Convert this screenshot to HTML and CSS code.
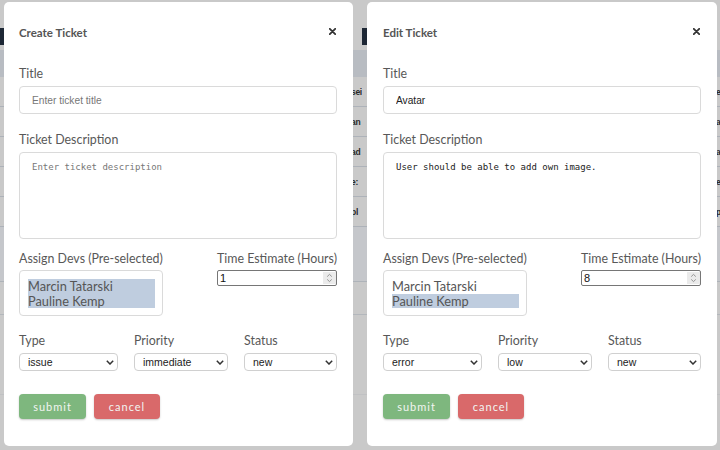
FILE: index.html
```html
<!DOCTYPE html>
<html lang="en">
<head>
<meta charset="utf-8">
<title>Tickets</title>
<link rel="stylesheet" href="styles.css">
</head>
<body>
<div class="screen">

  <div class="shot shot-left">
    <div class="page">
      <div class="nav"><div class="nav-block"></div></div>
      <div class="thead"></div>
      <div class="trow"><span class="cell cell-left">sei</span></div>
      <div class="trow"><span class="cell cell-left">an</span></div>
      <div class="trow"><span class="cell cell-left">ad</span></div>
      <div class="trow"><span class="cell cell-left">e:</span></div>
      <div class="trow"><span class="cell cell-left">pl</span></div>
      <div class="panel"></div>
      <div class="gap-a"></div>
      <div class="gap-b"></div>
    </div>

    <div class="modal modal-left">
      <div class="modal-header">
        <h2 class="modal-title">Create Ticket</h2>
        <svg class="close" width="7" height="7" viewBox="0 0 7 7"><path d="M0.8 0.8L6.2 6.2M6.2 0.8L0.8 6.2" stroke="#333" stroke-width="1.8" stroke-linecap="round"/></svg>
      </div>
      <div class="field field-title">
        <label class="label">Title</label>
        <input class="text-input" type="text" placeholder="Enter ticket title">
      </div>
      <div class="field field-desc">
        <label class="label">Ticket Description</label>
        <textarea class="textarea" placeholder="Enter ticket description"></textarea>
      </div>
      <div class="row-assign">
        <div class="col-devs">
          <label class="label label-tight">Assign Devs (Pre-selected)</label>
          <div class="multi">
            <div class="option selected">Marcin Tatarski</div>
            <div class="option selected">Pauline Kemp</div>
          </div>
        </div>
        <div class="col-time">
          <label class="label label-tight">Time Estimate (Hours)</label>
          <div class="number">
            <span class="number-value">1</span>
            <svg class="spin" width="13" height="12" viewBox="0 0 13 12"><rect width="13" height="12" fill="#ebebeb"/><path d="M4.2 4.6L6.5 2.4L8.8 4.6M4.2 7.4L6.5 9.6L8.8 7.4" fill="none" stroke="#8a8a8a" stroke-width="0.9"/></svg>
          </div>
        </div>
      </div>
      <div class="row-selects">
        <div class="sel-col">
          <label class="label">Type</label>
          <div class="select"><span>issue</span><svg class="chev" width="8" height="5" viewBox="0 0 8 5"><path d="M0.8 0.8L4 4L7.2 0.8" fill="none" stroke="#333" stroke-width="1.5"/></svg></div>
        </div>
        <div class="sel-col">
          <label class="label">Priority</label>
          <div class="select"><span>immediate</span><svg class="chev" width="8" height="5" viewBox="0 0 8 5"><path d="M0.8 0.8L4 4L7.2 0.8" fill="none" stroke="#333" stroke-width="1.5"/></svg></div>
        </div>
        <div class="sel-col">
          <label class="label">Status</label>
          <div class="select"><span>new</span><svg class="chev" width="8" height="5" viewBox="0 0 8 5"><path d="M0.8 0.8L4 4L7.2 0.8" fill="none" stroke="#333" stroke-width="1.5"/></svg></div>
        </div>
      </div>
      <div class="actions">
        <button class="btn btn-submit">submit</button>
        <button class="btn btn-cancel">cancel</button>
      </div>
    </div>
  </div>

  <div class="shot shot-right">
    <div class="page">
      <div class="nav"><div class="nav-block"></div></div>
      <div class="thead"></div>
      <div class="trow"><span class="cell cell-right">e</span></div>
      <div class="trow"><span class="cell cell-right">a</span></div>
      <div class="trow"><span class="cell cell-right">a</span></div>
      <div class="trow"><span class="cell cell-right">e</span></div>
      <div class="trow"><span class="cell cell-right">p</span></div>
      <div class="panel"></div>
      <div class="gap-a"></div>
      <div class="gap-b"></div>
    </div>

    <div class="modal modal-right">
      <div class="modal-header">
        <h2 class="modal-title">Edit Ticket</h2>
        <svg class="close" width="7" height="7" viewBox="0 0 7 7"><path d="M0.8 0.8L6.2 6.2M6.2 0.8L0.8 6.2" stroke="#333" stroke-width="1.8" stroke-linecap="round"/></svg>
      </div>
      <div class="field field-title">
        <label class="label">Title</label>
        <input class="text-input" type="text" value="Avatar">
      </div>
      <div class="field field-desc">
        <label class="label">Ticket Description</label>
        <textarea class="textarea">User should be able to add own image.</textarea>
      </div>
      <div class="row-assign">
        <div class="col-devs">
          <label class="label label-tight">Assign Devs (Pre-selected)</label>
          <div class="multi">
            <div class="option">Marcin Tatarski</div>
            <div class="option selected">Pauline Kemp</div>
          </div>
        </div>
        <div class="col-time">
          <label class="label label-tight">Time Estimate (Hours)</label>
          <div class="number">
            <span class="number-value">8</span>
            <svg class="spin" width="13" height="12" viewBox="0 0 13 12"><rect width="13" height="12" fill="#ebebeb"/><path d="M4.2 4.6L6.5 2.4L8.8 4.6M4.2 7.4L6.5 9.6L8.8 7.4" fill="none" stroke="#8a8a8a" stroke-width="0.9"/></svg>
          </div>
        </div>
      </div>
      <div class="row-selects">
        <div class="sel-col">
          <label class="label">Type</label>
          <div class="select"><span>error</span><svg class="chev" width="8" height="5" viewBox="0 0 8 5"><path d="M0.8 0.8L4 4L7.2 0.8" fill="none" stroke="#333" stroke-width="1.5"/></svg></div>
        </div>
        <div class="sel-col">
          <label class="label">Priority</label>
          <div class="select"><span>low</span><svg class="chev" width="8" height="5" viewBox="0 0 8 5"><path d="M0.8 0.8L4 4L7.2 0.8" fill="none" stroke="#333" stroke-width="1.5"/></svg></div>
        </div>
        <div class="sel-col">
          <label class="label">Status</label>
          <div class="select"><span>new</span><svg class="chev" width="8" height="5" viewBox="0 0 8 5"><path d="M0.8 0.8L4 4L7.2 0.8" fill="none" stroke="#333" stroke-width="1.5"/></svg></div>
        </div>
      </div>
      <div class="actions">
        <button class="btn btn-submit">submit</button>
        <button class="btn btn-cancel">cancel</button>
      </div>
    </div>
  </div>

</div>
</body>
</html>
```

FILE: styles.css
```css
* { box-sizing: border-box; }

body {
  margin: 0;
  background: #c9c9c9;
  font-family: Lato, "Liberation Sans", sans-serif;
}

.screen {
  display: flex;
  width: 720px;
  height: 450px;
}

.shot {
  position: relative;
  height: 450px;
  overflow: hidden;
  background: #c9c9c9;
  flex: none;
}

.shot-left { width: 362px; }
.shot-right { width: 358px; }

/* dimmed page behind the modal */
.page {
  width: 100%;
}

.nav {
  margin-top: 28px;
  height: 17px;
}

.nav-block {
  width: 80px;
  height: 17px;
  background: #1d2735;
}

.thead {
  margin-top: 5px;
  height: 27px;
  background: #b8bcc2;
}

.trow {
  height: 30px;
  border-bottom: 1px solid #adb2b9;
  display: flex;
  align-items: center;
}

.cell {
  font: 700 8.5px "Liberation Sans", sans-serif;
  color: #2a2a2a;
  white-space: nowrap;
}

.cell-left { margin-left: 351px; letter-spacing: -0.3px; }
.cell-right { margin-left: 354px; }

.panel {
  height: 55px;
  background: #c5c7cb;
  border-bottom: 1px solid #aeb3b9;
}

.gap-a {
  height: 33px;
  border-bottom: 1px solid #b3b7bc;
}

.gap-b {
  height: 80px;
  border-bottom: 1px solid #c0c1c3;
}

/* modal */
.modal {
  position: absolute;
  top: 2px;
  height: 444px;
  background: #fff;
  border-radius: 5px;
  padding: 24px 16px 0 16px;
}

.modal-left {
  left: 4px;
  width: 349px;
  padding-left: 15px;
}

.modal-right {
  left: 5px;
  width: 350px;
}

.modal-header {
  display: flex;
  justify-content: space-between;
  align-items: flex-start;
  height: 14px;
}

.modal-title {
  margin: 0;
  font: 700 11.5px/14px Lato, sans-serif;
  color: #555;
}

.close {
  margin-top: 2px;
  margin-right: 1px;
}

.label {
  display: block;
  font: 400 12.4px/16px Lato, sans-serif;
  color: #585858;
  padding-top: 1px;
  margin-bottom: 4px;
  white-space: nowrap;
}

.label-tight { margin-bottom: 3px; }

.field-title { margin-top: 25px; }
.field-desc { margin-top: 17px; }

.text-input {
  display: block;
  width: 100%;
  height: 28px;
  margin: 0;
  border: 1px solid #dadada;
  border-radius: 4px;
  padding: 0 12px;
  font: 400 10.2px "Liberation Sans", sans-serif;
  color: #222;
  background: #fff;
  outline: none;
}

.text-input::placeholder { color: #777; }

.textarea {
  display: block;
  width: 100%;
  height: 87px;
  margin: 0;
  border: 1px solid #dadada;
  border-radius: 4px;
  padding: 8px 12px;
  font: 400 9px/12px "DejaVu Sans Mono", monospace;
  color: #222;
  resize: none;
  outline: none;
  background: #fff;
}

.textarea::placeholder { color: #777; }

.row-assign {
  margin-top: 11px;
  display: flex;
  justify-content: space-between;
}

.col-devs { width: 144px; }
.col-time { width: 120px; }

.multi {
  width: 144px;
  height: 46px;
  border: 1px solid #dadada;
  border-radius: 4px;
  padding: 8px 7px 0 8px;
}

.option {
  font: 400 12.8px/14.5px Lato, sans-serif;
  color: #555;
  white-space: nowrap;
}

.option.selected { background: #bfcddf; }

.number {
  display: flex;
  justify-content: space-between;
  align-items: center;
  width: 120px;
  height: 16px;
  border: 1px solid #767676;
  border-radius: 2px;
  padding: 0 0 0 2px;
}

.number-value {
  font: 400 11px "Liberation Sans", sans-serif;
  color: #111;
}

.spin { display: block; }

.row-selects {
  margin-top: 16px;
  display: grid;
  grid-template-columns: 99px 94px 93px;
  column-gap: 16px;
}

.select {
  display: flex;
  justify-content: space-between;
  align-items: center;
  height: 18px;
  border: 1px solid #d0d0d0;
  border-radius: 4px;
  padding: 0 3px 0 8px;
  font: 400 10.5px "Liberation Sans", sans-serif;
  color: #222;
}

.chev { display: block; }

.actions {
  margin-top: 23px;
  display: flex;
  gap: 8px;
}

.btn {
  height: 25px;
  border: none;
  border-radius: 4px;
  padding: 0;
  font: 400 11px/25px Lato, sans-serif;
  letter-spacing: 1px;
  color: #f2f5f2;
  box-shadow: 0 1px 2px rgba(0, 0, 0, 0.22);
}

.btn-submit { width: 67px; background: #7eb77e; }
.btn-cancel { width: 66px; background: #d9696a; }
```
